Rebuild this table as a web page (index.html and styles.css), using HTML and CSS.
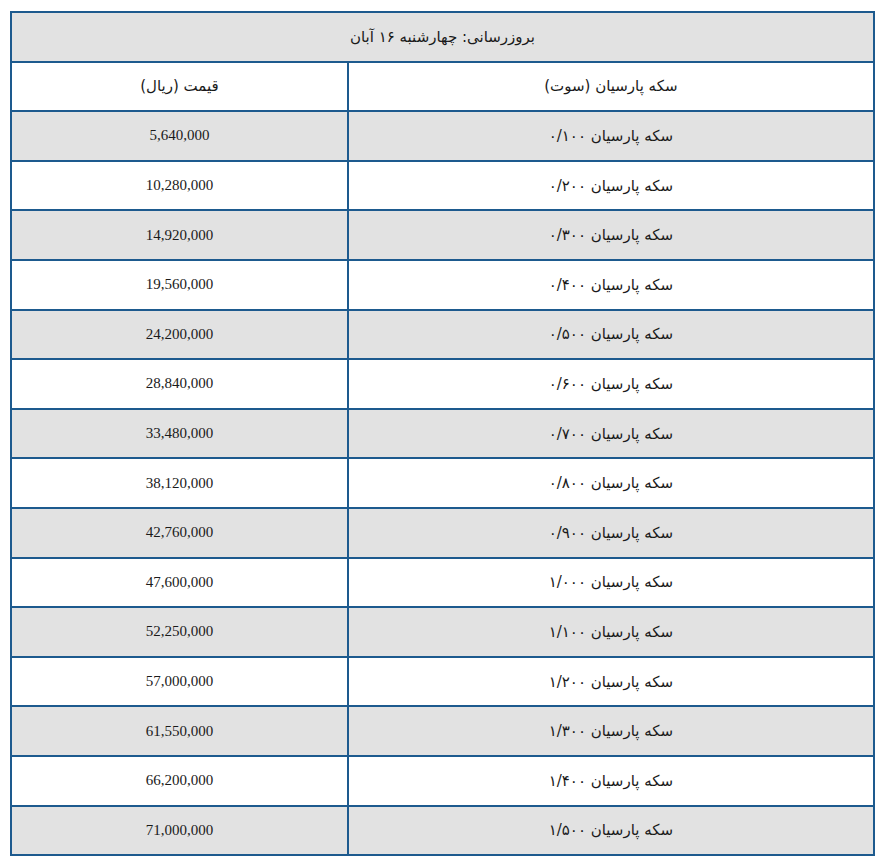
FILE: index.html
```html
<!DOCTYPE html>
<html lang="fa" dir="rtl">
<head>
<meta charset="utf-8">
<link rel="stylesheet" href="styles.css">
</head>
<body>
<table class="prices">
  <tr class="gray"><td colspan="2" class="fa">بروزرسانی: چهارشنبه ۱۶ آبان</td></tr>
  <tr><td class="fa name">سکه پارسیان (سوت)</td><td class="fa price">قیمت (ریال)</td></tr>
  <tr class="gray"><td class="fa name">سکه پارسیان ۰/۱۰۰</td><td class="num price">5,640,000</td></tr>
  <tr><td class="fa name">سکه پارسیان ۰/۲۰۰</td><td class="num price">10,280,000</td></tr>
  <tr class="gray"><td class="fa name">سکه پارسیان ۰/۳۰۰</td><td class="num price">14,920,000</td></tr>
  <tr><td class="fa name">سکه پارسیان ۰/۴۰۰</td><td class="num price">19,560,000</td></tr>
  <tr class="gray"><td class="fa name">سکه پارسیان ۰/۵۰۰</td><td class="num price">24,200,000</td></tr>
  <tr><td class="fa name">سکه پارسیان ۰/۶۰۰</td><td class="num price">28,840,000</td></tr>
  <tr class="gray"><td class="fa name">سکه پارسیان ۰/۷۰۰</td><td class="num price">33,480,000</td></tr>
  <tr><td class="fa name">سکه پارسیان ۰/۸۰۰</td><td class="num price">38,120,000</td></tr>
  <tr class="gray"><td class="fa name">سکه پارسیان ۰/۹۰۰</td><td class="num price">42,760,000</td></tr>
  <tr><td class="fa name">سکه پارسیان ۱/۰۰۰</td><td class="num price">47,600,000</td></tr>
  <tr class="gray"><td class="fa name">سکه پارسیان ۱/۱۰۰</td><td class="num price">52,250,000</td></tr>
  <tr><td class="fa name">سکه پارسیان ۱/۲۰۰</td><td class="num price">57,000,000</td></tr>
  <tr class="gray"><td class="fa name">سکه پارسیان ۱/۳۰۰</td><td class="num price">61,550,000</td></tr>
  <tr><td class="fa name">سکه پارسیان ۱/۴۰۰</td><td class="num price">66,200,000</td></tr>
  <tr class="gray"><td class="fa name">سکه پارسیان ۱/۵۰۰</td><td class="num price">71,000,000</td></tr>
</table>
</body>
</html>
```
FILE: styles.css
```css
html, body {
  margin: 0;
  padding: 0;
  background: #ffffff;
}
body {
  padding: 11px 14px 0 10px;
}
.prices {
  width: 865px;
  border-collapse: collapse;
  border: 2px solid #1d5a8e;
  color: #1a1a1a;
}
.prices td {
  border: 2px solid #1d5a8e;
  height: 49.6px;
  padding: 0;
  text-align: center;
  vertical-align: middle;
  box-sizing: border-box;
}
.gray td {
  background: #e2e2e2;
}
.fa {
  font-family: "DejaVu Sans", sans-serif;
  font-size: 15px;
}
.num {
  font-family: "Liberation Serif", serif;
  font-size: 15px;
}
.name {
  width: 525px;
}
.price {
  width: 336px;
}
```
